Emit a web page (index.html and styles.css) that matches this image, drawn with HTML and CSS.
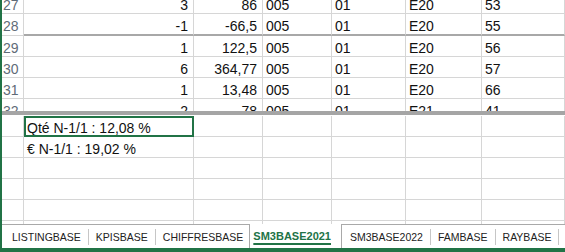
FILE: index.html
```html
<!DOCTYPE html>
<html lang="fr">
<head>
  <meta charset="UTF-8" />
  <title>SM3BASE2021</title>
  <link rel="stylesheet" href="styles.css">
</head>
<body>
  <div class="sheet">

    <div class="pane pane-top">
      <div class="rows rows-top">
        <div class="row">
          <div class="hdr">27</div>
          <div class="c num">3</div><div class="c num">86</div>
          <div class="c">005</div><div class="c">01</div><div class="c">E20</div><div class="c">53</div>
        </div>
        <div class="row row-frozen">
          <div class="hdr">28</div>
          <div class="c num">-1</div><div class="c num">-66,5</div>
          <div class="c">005</div><div class="c">01</div><div class="c">E20</div><div class="c">55</div>
        </div>
        <div class="row">
          <div class="hdr">29</div>
          <div class="c num">1</div><div class="c num">122,5</div>
          <div class="c">005</div><div class="c">01</div><div class="c">E20</div><div class="c">56</div>
        </div>
        <div class="row">
          <div class="hdr">30</div>
          <div class="c num">6</div><div class="c num">364,77</div>
          <div class="c">005</div><div class="c">01</div><div class="c">E20</div><div class="c">57</div>
        </div>
        <div class="row">
          <div class="hdr">31</div>
          <div class="c num">1</div><div class="c num">13,48</div>
          <div class="c">005</div><div class="c">01</div><div class="c">E20</div><div class="c">66</div>
        </div>
        <div class="row">
          <div class="hdr">32</div>
          <div class="c num">2</div><div class="c num">78</div>
          <div class="c">005</div><div class="c">01</div><div class="c">E21</div><div class="c">41</div>
        </div>
      </div>
    </div>

    <div class="split"></div>

    <div class="pane pane-bottom">
      <div class="row">
        <div class="hdr"></div>
        <div class="c selected">Qté N-1/1 : 12,08 %</div><div class="c"></div>
        <div class="c"></div><div class="c"></div><div class="c"></div><div class="c"></div>
      </div>
      <div class="row">
        <div class="hdr"></div>
        <div class="c">€ N-1/1 : 19,02 %</div><div class="c"></div>
        <div class="c"></div><div class="c"></div><div class="c"></div><div class="c"></div>
      </div>
      <div class="row">
        <div class="hdr"></div><div class="c"></div><div class="c"></div>
        <div class="c"></div><div class="c"></div><div class="c"></div><div class="c"></div>
      </div>
      <div class="row">
        <div class="hdr"></div><div class="c"></div><div class="c"></div>
        <div class="c"></div><div class="c"></div><div class="c"></div><div class="c"></div>
      </div>
      <div class="row">
        <div class="hdr"></div><div class="c"></div><div class="c"></div>
        <div class="c"></div><div class="c"></div><div class="c"></div><div class="c"></div>
      </div>
      <div class="row">
        <div class="hdr"></div><div class="c"></div><div class="c"></div>
        <div class="c"></div><div class="c"></div><div class="c"></div><div class="c"></div>
      </div>
    </div>

    <div class="tabs">
      <div class="tab">LISTINGBASE</div>
      <div class="tab">KPISBASE</div>
      <div class="tab no-sep">CHIFFRESBASE</div>
      <div class="tab active"><span>SM3BASE2021</span></div>
      <div class="tab">SM3BASE2022</div>
      <div class="tab">FAMBASE</div>
      <div class="tab">RAYBASE</div>
    </div>

  </div>
</body>
</html>
```

FILE: styles.css
```css
html, body {
  margin: 0;
  padding: 0;
  background: #fff;
}

.sheet {
  width: 565px;
  height: 252px;
  box-sizing: border-box;
  border-left: 2px solid #217346;
  display: flex;
  flex-direction: column;
  overflow: hidden;
  font-family: "Liberation Sans", Arial, sans-serif;
  color: #111;
}

/* panes */
.pane {
  overflow: hidden;
  flex: none;
}

.pane-top {
  height: 111px;
}

.rows-top {
  margin-top: -7px;
}

.pane-bottom {
  height: 109px;
  padding-top: 1px;
  box-sizing: border-box;
}

.split {
  height: 4px;
  background: #a5a5a5;
  flex: none;
}

/* grid rows */
.row {
  display: grid;
  grid-template-columns: 22px 170px 69px 69px 74px 76px 83px;
  height: 21px;
}

.row > div {
  box-sizing: border-box;
  border-right: 1px solid #d6d6d6;
  border-bottom: 1px solid #d6d6d6;
  font-size: 14px;
  line-height: 17px;
  padding: 4px 3px 0;
  white-space: nowrap;
  overflow: hidden;
}

.row .hdr {
  color: #5f6b78;
  padding-left: 1px;
}

.row .num {
  text-align: right;
  padding-right: 5px;
}

.row-frozen {
  height: 22px;
}

.row-frozen .c {
  border-bottom: 2px solid #a8a8a8;
}

.row .selected {
  outline: 2px solid #217346;
  outline-offset: -2px;
}

/* sheet tabs */
.tabs {
  flex: none;
  height: 28px;
  box-sizing: border-box;
  border-top: 1px solid #a9a9a9;
  border-bottom: 4px solid #217346;
  display: flex;
  align-items: center;
  padding-left: 3px;
  font-size: 10.5px;
  color: #222;
}

.tab {
  line-height: 16px;
  padding: 0 7px;
  border-right: 1px solid #c6c6c6;
}

.tab.no-sep {
  border-right: none;
  padding-right: 6px;
}

.tab.active {
  align-self: stretch;
  margin-top: -1px;
  line-height: 24px;
  padding: 0 10px 0 3px;
  border-left: 1px solid #a9a9a9;
  border-right: 1px solid #a9a9a9;
  background: #fff;
  color: #217346;
  font-size: 11px;
  font-weight: bold;
}

.tab.active span {
  text-decoration: underline;
  text-decoration-thickness: 2px;
  text-underline-offset: 3px;
}

.tab.active + .tab {
  padding-left: 8px;
}
```
